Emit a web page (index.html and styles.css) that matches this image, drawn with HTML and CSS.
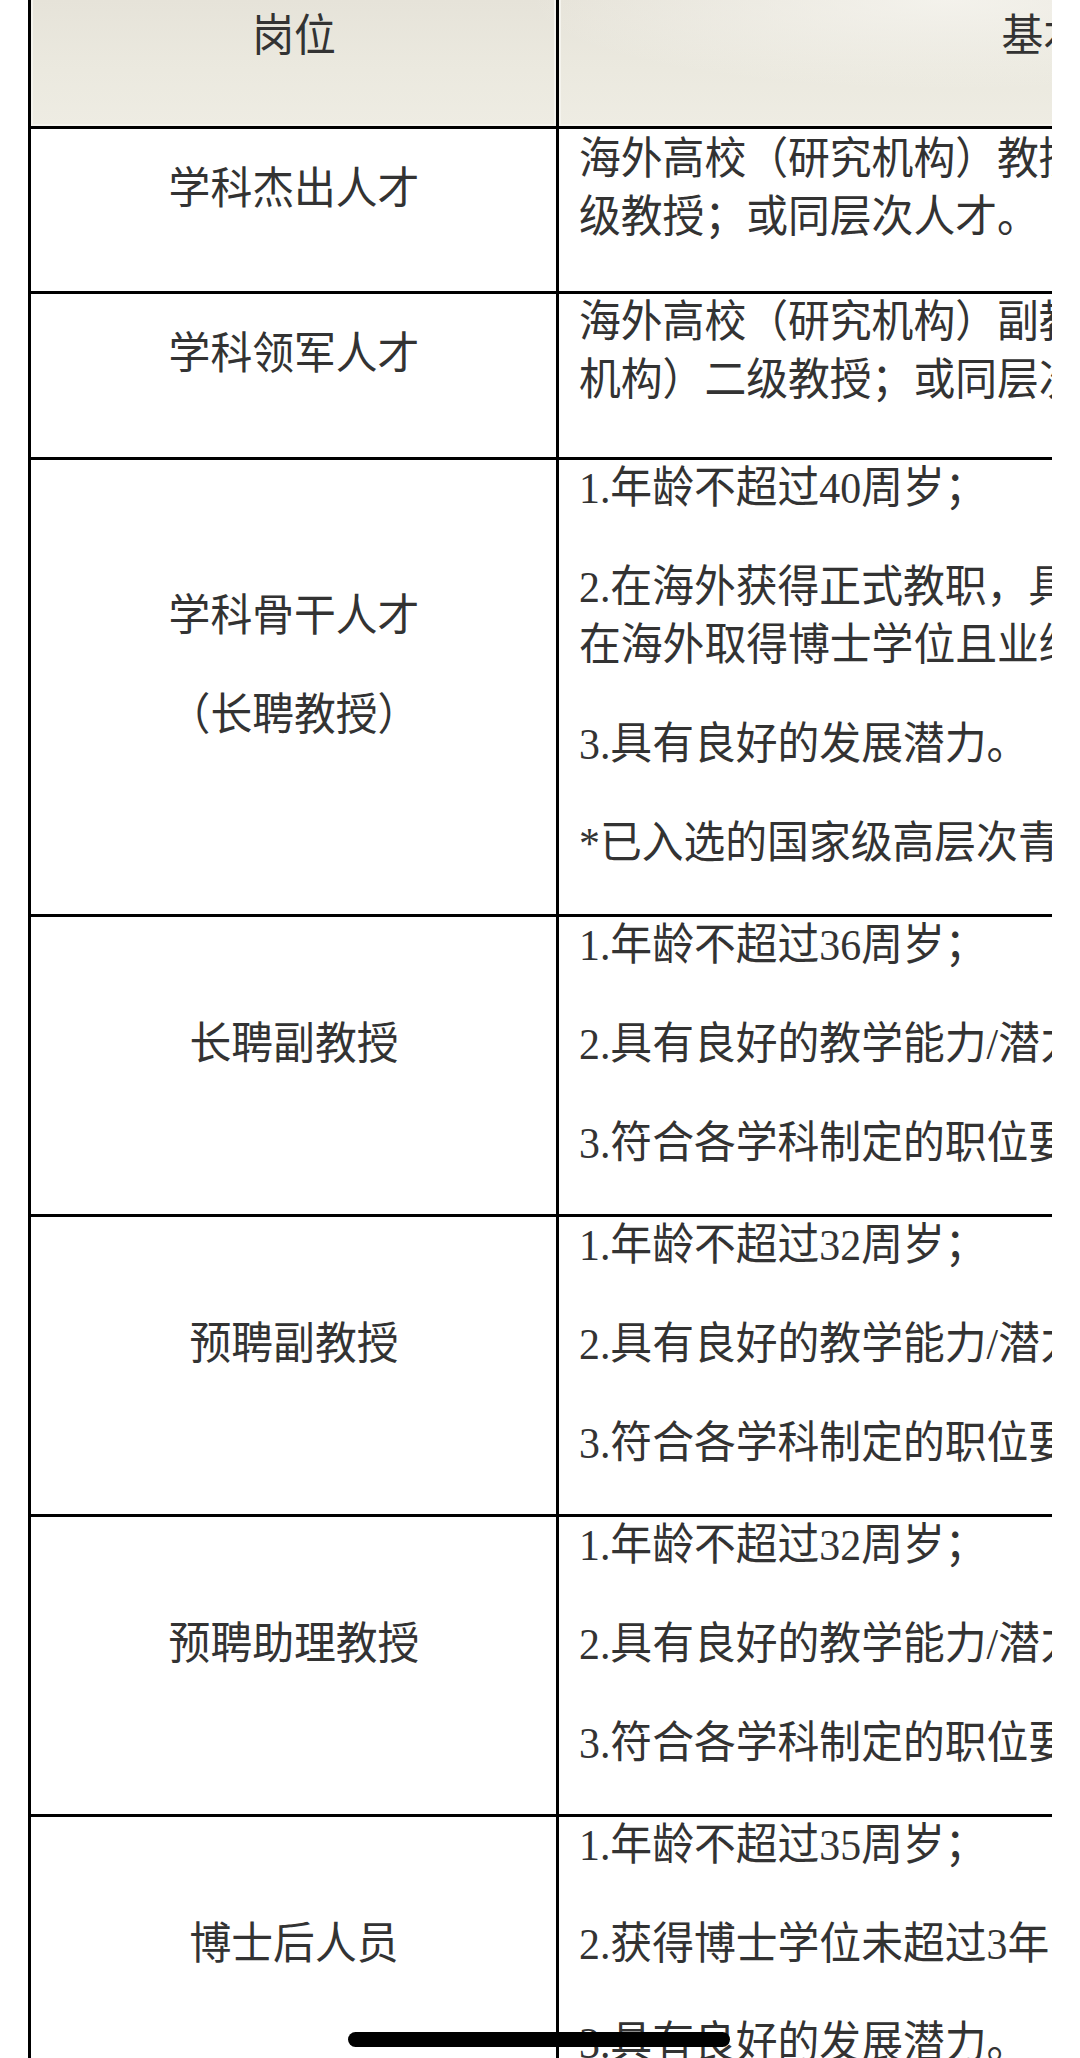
FILE: index.html
```html
<!DOCTYPE html>
<html lang="zh-CN">
<head>
<meta charset="utf-8">
<title>岗位与基本条件</title>
<link rel="stylesheet" href="styles.css">
</head>
<body>
<div class="clip">
  <div class="table">
    <div class="row head">
      <div class="cell pos hcell"><p>岗位</p></div>
      <div class="cell req hcell"><p>基本条件</p></div>
    </div>
    <div class="row r1">
      <div class="cell pos"><p>学科杰出人才</p></div>
      <div class="cell req"><p>海外高校（研究机构）教授；或国内高校（研究机构）一<br>级教授；或同层次人才。</p></div>
    </div>
    <div class="row r2">
      <div class="cell pos"><p>学科领军人才</p></div>
      <div class="cell req"><p>海外高校（研究机构）副教授；或国内高校（研究<br>机构）二级教授；或同层次人才。</p></div>
    </div>
    <div class="row">
      <div class="cell pos"><p>学科骨干人才</p><p>（长聘教授）</p></div>
      <div class="cell req">
        <p>1.年龄不超过40周岁；</p>
        <p>2.在海外获得正式教职，具有博士学位；或<br>在海外取得博士学位且业绩突出者；</p>
        <p>3.具有良好的发展潜力。</p>
        <p>*已入选的国家级高层次青年人才项目者，年龄可适当放宽。</p>
      </div>
    </div>
    <div class="row">
      <div class="cell pos"><p>长聘副教授</p></div>
      <div class="cell req">
        <p>1.年龄不超过36周岁；</p>
        <p>2.具有良好的教学能力/潜力和科研能力/潜力；</p>
        <p>3.符合各学科制定的职位要求。</p>
      </div>
    </div>
    <div class="row">
      <div class="cell pos"><p>预聘副教授</p></div>
      <div class="cell req">
        <p>1.年龄不超过32周岁；</p>
        <p>2.具有良好的教学能力/潜力和科研能力/潜力；</p>
        <p>3.符合各学科制定的职位要求。</p>
      </div>
    </div>
    <div class="row">
      <div class="cell pos"><p>预聘助理教授</p></div>
      <div class="cell req">
        <p>1.年龄不超过32周岁；</p>
        <p>2.具有良好的教学能力/潜力和科研能力/潜力；</p>
        <p>3.符合各学科制定的职位要求。</p>
      </div>
    </div>
    <div class="row">
      <div class="cell pos"><p>博士后人员</p></div>
      <div class="cell req">
        <p>1.年龄不超过35周岁；</p>
        <p>2.获得博士学位未超过3年；</p>
        <p>3.具有良好的发展潜力。</p>
      </div>
    </div>
  </div>
</div>
<div class="home-bar"></div>
</body>
</html>
```

FILE: styles.css
```css
html, body {
  margin: 0;
  padding: 0;
  background: #ffffff;
}

body {
  font-family: "Liberation Serif", "Noto Sans CJK SC", serif;
  font-size: 44px;
  line-height: 58px;
  color: #333333;
  height: 2058px;
  overflow: hidden;
}

.clip {
  margin-left: 28px;
  width: 1024px;
  overflow: hidden;
}

.table {
  width: 1580px;
  border-left: 3px solid #000;
}

.row {
  display: grid;
  grid-template-columns: 528px 1fr;
  border-bottom: 3px solid #000;
}

.cell {
  box-sizing: border-box;
}

.cell p {
  margin: 0 0 41px;
  white-space: nowrap;
  transform: scaleX(0.95);
}

.pos {
  border-right: 3px solid #000;
  display: flex;
  flex-direction: column;
  justify-content: center;
  align-items: center;
  text-align: center;
}

.pos p {
  transform-origin: center;
}

.req {
  padding-left: 20px;
}

.req p {
  transform-origin: left center;
}

.head {
  height: 126px;
  background:
    radial-gradient(ellipse 420px 90px at 58% 0%, rgba(248, 247, 242, 0.75), rgba(248, 247, 242, 0) 100%),
    linear-gradient(#e6e3d9, #ebe9df 55%, #eeece3);
}

.hcell {
  box-shadow: inset 2px 0 0 #f4f3ed, inset -2px 0 0 #f4f3ed, inset 0 -2px 0 #f4f3ed;
  justify-content: flex-start;
  padding-top: 8px;
}

.head .req {
  text-align: center;
  padding-left: 0;
}

.head .req p {
  transform-origin: center;
}

.r1 {
  min-height: 162px;
}

.r1 .req {
  padding-top: 2px;
}

.r2 {
  min-height: 163px;
}

.home-bar {
  position: fixed;
  left: 348px;
  top: 2032px;
  width: 382px;
  height: 15px;
  border-radius: 8px;
  background: #000;
}
```
